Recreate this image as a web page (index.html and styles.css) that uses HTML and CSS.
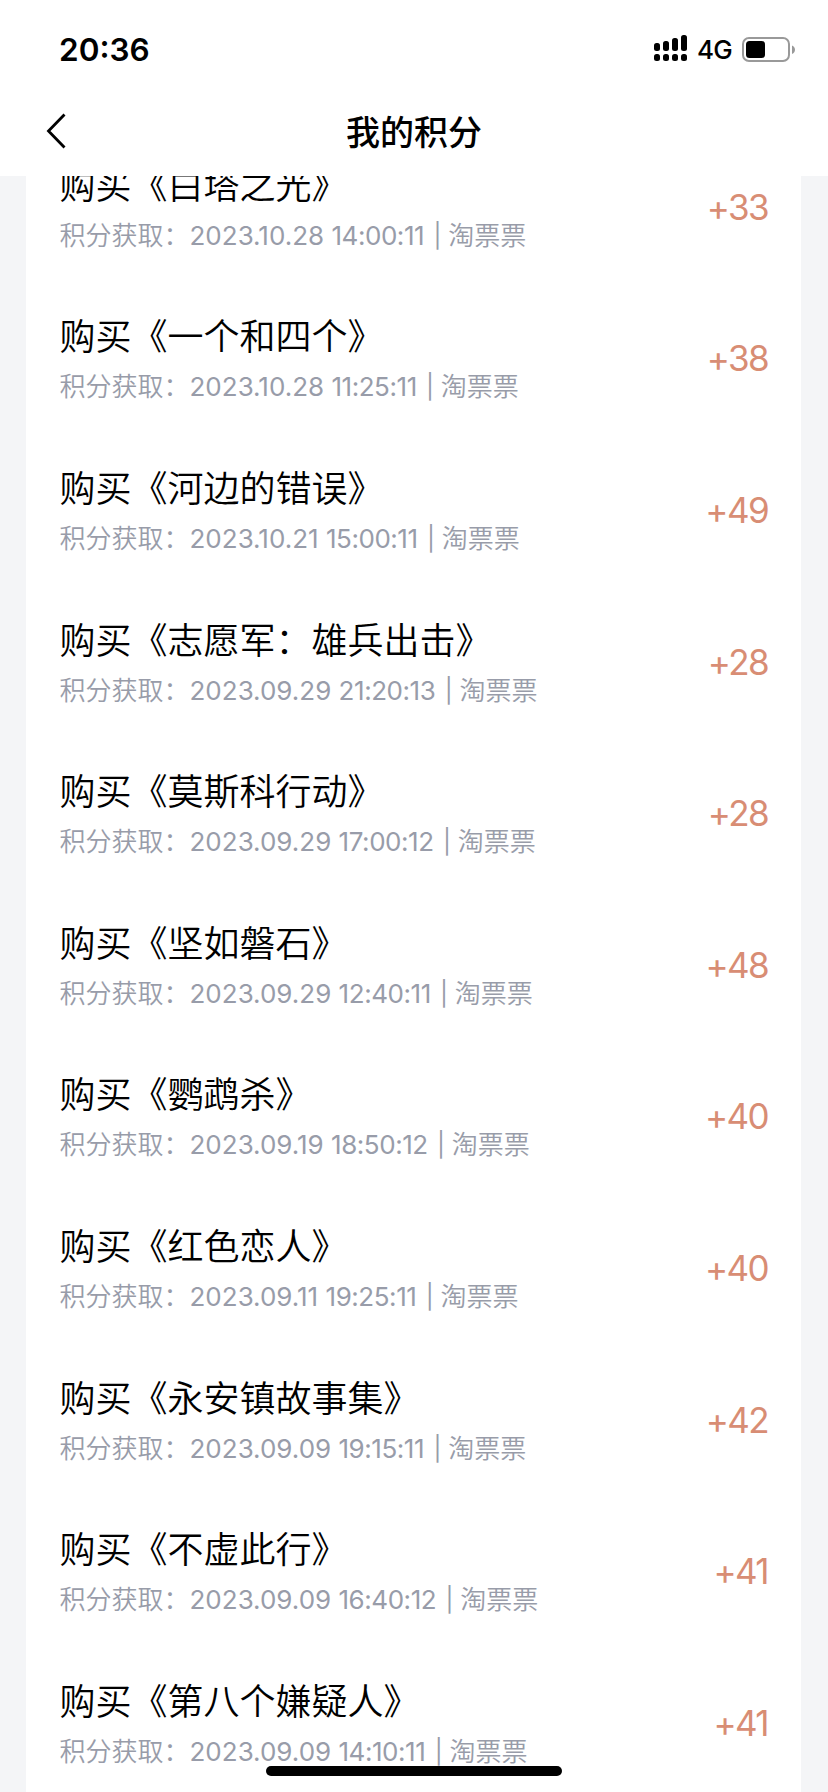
FILE: index.html
```
<!DOCTYPE html>
<html lang="zh-CN">
<head>
  <meta charset="UTF-8">
  <title>我的积分</title>
  <link rel="stylesheet" href="styles.css">
</head>
<body>

  <div class="status-bar">
    <span class="time">20:36</span>
    <div class="status-icons">
      <svg class="signal" width="34" height="26" viewBox="0 0 34 26">
        <rect x="0" y="8" width="6" height="8" rx="2.5"/>
        <rect x="9" y="6" width="6" height="10" rx="2.5"/>
        <rect x="18" y="3" width="6" height="13" rx="2.5"/>
        <rect x="27" y="0" width="6" height="16" rx="2.5"/>
        <rect x="0" y="19" width="6" height="7" rx="2.5"/>
        <rect x="9" y="19" width="6" height="7" rx="2.5"/>
        <rect x="18" y="19" width="6" height="7" rx="2.5"/>
        <rect x="27" y="19" width="6" height="7" rx="2.5"/>
      </svg>
      <span class="network">4G</span>
      <svg class="battery" width="54" height="26" viewBox="0 0 54 26">
        <rect x="1" y="1" width="46" height="23" rx="6" fill="none" stroke="#999" stroke-width="2"/>
        <rect x="4" y="4" width="19" height="17" rx="3.5"/>
        <path d="M50 8.500c4 1.500 4 7 0 8.500z" fill="#999"/>
      </svg>
    </div>
  </div>

  <div class="nav-bar">
    <svg class="back" width="22" height="38" viewBox="0 0 22 38">
      <path d="M20.500 2.500L4.500 19l16 16.500" fill="none" stroke="#000" stroke-width="2.800"/>
    </svg>
    <h1>我的积分</h1>
  </div>

  <div class="content">
    <div class="list">
      <div class="item">
        <div class="info">
          <div class="name">购买《白塔之光》</div>
          <div class="desc">积分获取：<span class="date">2023.10.28 <span class="clock">14:00:11</span> <span class="bar">|</span></span> 淘票票</div>
        </div>
        <div class="points">+33</div>
      </div>
      <div class="item">
        <div class="info">
          <div class="name">购买《一个和四个》</div>
          <div class="desc">积分获取：<span class="date">2023.10.28 <span class="clock">11:25:11</span> <span class="bar">|</span></span> 淘票票</div>
        </div>
        <div class="points">+38</div>
      </div>
      <div class="item">
        <div class="info">
          <div class="name">购买《河边的错误》</div>
          <div class="desc">积分获取：<span class="date">2023.10.21 <span class="clock">15:00:11</span> <span class="bar">|</span></span> 淘票票</div>
        </div>
        <div class="points">+49</div>
      </div>
      <div class="item">
        <div class="info">
          <div class="name">购买《志愿军：雄兵出击》</div>
          <div class="desc">积分获取：<span class="date">2023.09.29 <span class="clock">21:20:13</span> <span class="bar">|</span></span> 淘票票</div>
        </div>
        <div class="points">+28</div>
      </div>
      <div class="item">
        <div class="info">
          <div class="name">购买《莫斯科行动》</div>
          <div class="desc">积分获取：<span class="date">2023.09.29 <span class="clock">17:00:12</span> <span class="bar">|</span></span> 淘票票</div>
        </div>
        <div class="points">+28</div>
      </div>
      <div class="item">
        <div class="info">
          <div class="name">购买《坚如磐石》</div>
          <div class="desc">积分获取：<span class="date">2023.09.29 <span class="clock">12:40:11</span> <span class="bar">|</span></span> 淘票票</div>
        </div>
        <div class="points">+48</div>
      </div>
      <div class="item">
        <div class="info">
          <div class="name">购买《鹦鹉杀》</div>
          <div class="desc">积分获取：<span class="date">2023.09.19 <span class="clock">18:50:12</span> <span class="bar">|</span></span> 淘票票</div>
        </div>
        <div class="points">+40</div>
      </div>
      <div class="item">
        <div class="info">
          <div class="name">购买《红色恋人》</div>
          <div class="desc">积分获取：<span class="date">2023.09.11 <span class="clock">19:25:11</span> <span class="bar">|</span></span> 淘票票</div>
        </div>
        <div class="points">+40</div>
      </div>
      <div class="item">
        <div class="info">
          <div class="name">购买《永安镇故事集》</div>
          <div class="desc">积分获取：<span class="date">2023.09.09 <span class="clock">19:15:11</span> <span class="bar">|</span></span> 淘票票</div>
        </div>
        <div class="points">+42</div>
      </div>
      <div class="item">
        <div class="info">
          <div class="name">购买《不虚此行》</div>
          <div class="desc">积分获取：<span class="date">2023.09.09 <span class="clock">16:40:12</span> <span class="bar">|</span></span> 淘票票</div>
        </div>
        <div class="points">+41</div>
      </div>
      <div class="item">
        <div class="info">
          <div class="name">购买《第八个嫌疑人》</div>
          <div class="desc">积分获取：<span class="date">2023.09.09 <span class="clock">14:10:11</span> <span class="bar">|</span></span> 淘票票</div>
        </div>
        <div class="points">+41</div>
      </div>
    </div>
  </div>

  <div class="home-indicator"></div>

</body>
</html>
```

FILE: styles.css
```
* {
  box-sizing: border-box;
}

body {
  margin: 0;
  height: 1792px;
  display: flex;
  flex-direction: column;
  overflow: hidden;
  background: #fff;
  color: #000;
  font-family: "Noto Sans CJK SC", sans-serif;
  text-spacing-trim: space-all;
}

.status-bar {
  height: 88px;
  padding: 11px 32px 0 59px;
  display: flex;
  justify-content: space-between;
  align-items: center;
  font-family: Inter, sans-serif;
}

.time {
  font-size: 31.5px;
  font-weight: 600;
}

.status-icons {
  display: flex;
  align-items: center;
}

.signal {
  margin: 0 9px 3px 0;
}

.network {
  width: 45px;
  font-size: 26px;
  font-weight: 450;
  letter-spacing: -0.8px;
}

.nav-bar {
  height: 88px;
  padding: 0 44px 2px;
  display: flex;
  align-items: center;
}

.back {
  flex: none;
}

h1 {
  flex: 1;
  margin: 0 22px 2px 0;
  text-align: center;
  font-size: 34px;
  font-weight: 500;
}

.content {
  flex: 1;
  min-height: 0;
  padding: 0 27px 0 26px;
  overflow: hidden;
  background: #f4f5f7;
}

/* the list is scrolled a little under the nav bar */
.list {
  margin-top: -46px;
  background: #fff;
}

.item {
  height: 151.6px;
  padding: 0 34px 0 33.5px;
  display: flex;
  align-items: center;
  justify-content: space-between;
}

.name {
  font-size: 36px;
  font-weight: 350;
  line-height: 50px;
  margin-bottom: 8px;
}

.desc {
  font-size: 26px;
  font-weight: 350;
  line-height: 36px;
  color: #989ca9;
}

.date {
  font-family: Inter, sans-serif;
  font-weight: 375;
}

.clock {
  letter-spacing: -0.45px;
}

.bar {
  margin: 0 1px 0 2px;
  font-size: 24px;
  vertical-align: 1px;
}

.points {
  padding-top: 2px;
  font-family: Inter, sans-serif;
  font-size: 35px;
  letter-spacing: -1.6px;
  margin-right: -1px;
  color: #d88d74;
}

.home-indicator {
  position: absolute;
  left: 266px;
  top: 1766px;
  width: 296px;
  height: 10px;
  border-radius: 5px;
  background: #000;
}
```
